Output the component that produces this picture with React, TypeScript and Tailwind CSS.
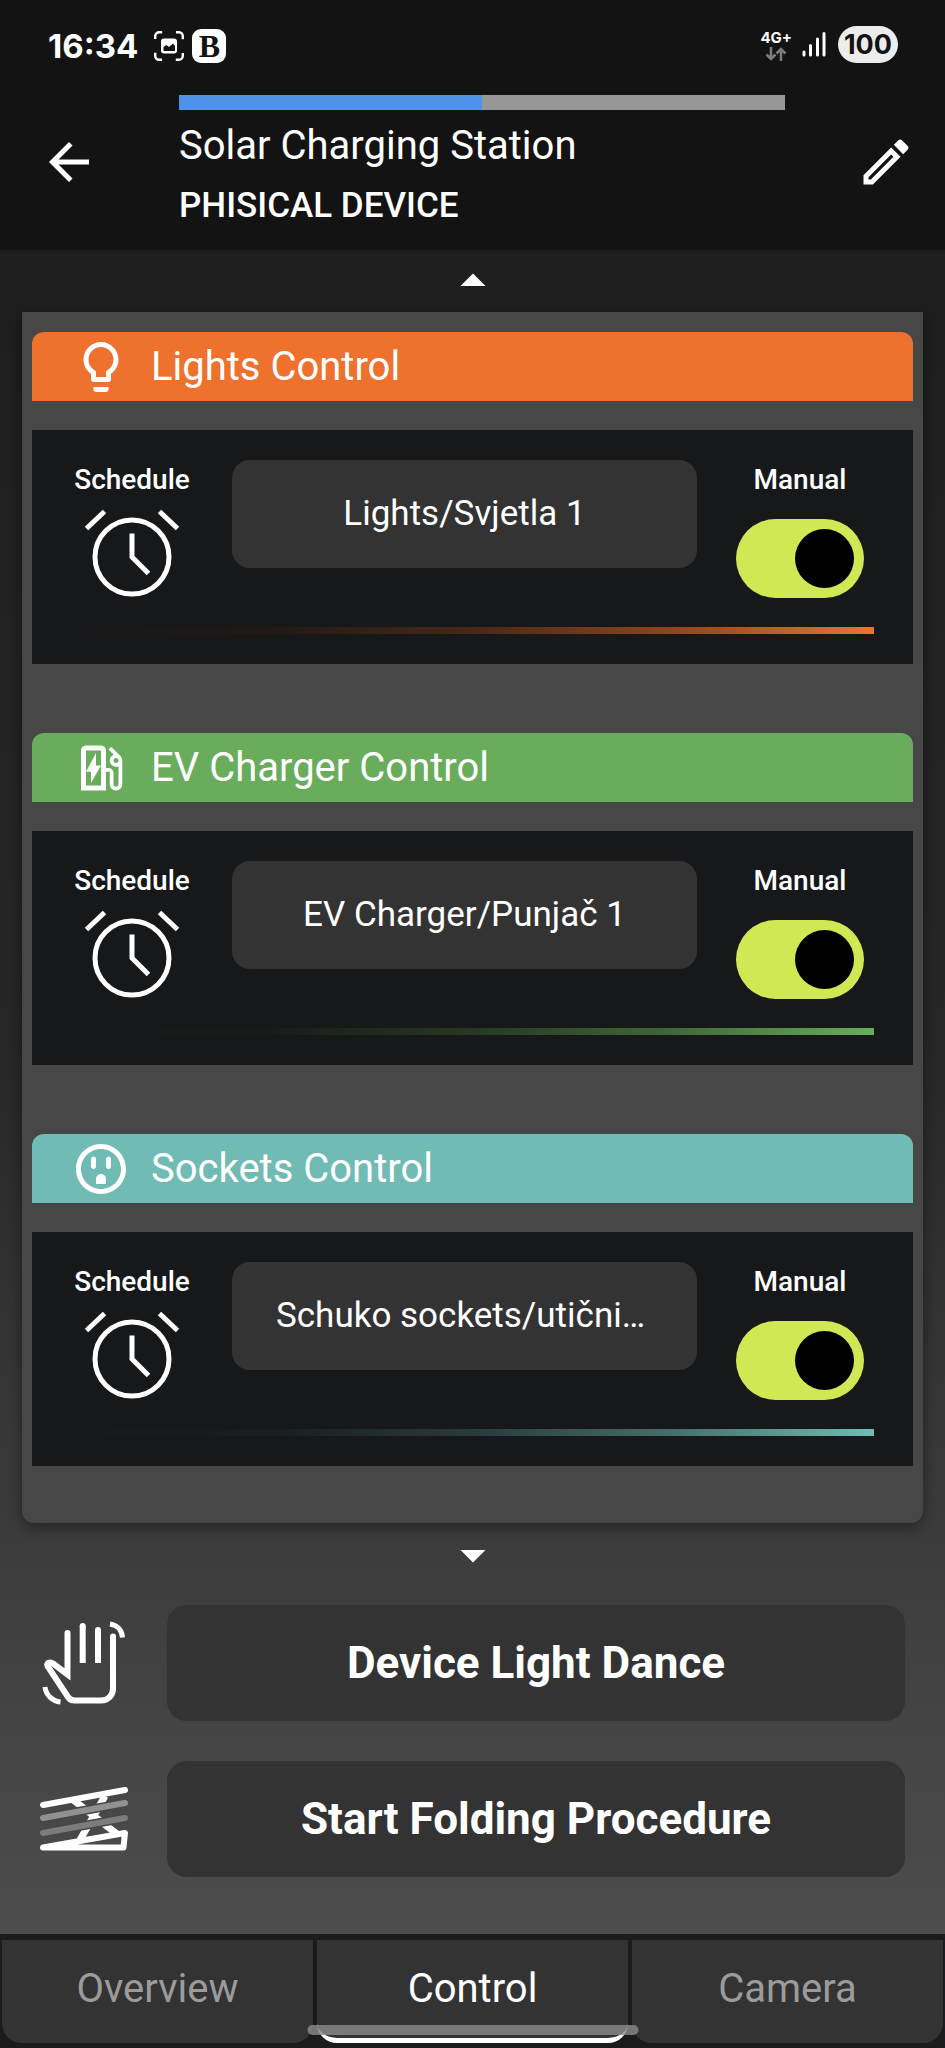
import { useState, type ReactNode } from 'react';
import {
  MdArrowBack,
  MdArrowDropDown,
  MdArrowDropUp,
  MdOutlineEdit,
  MdOutlineEvStation,
  MdOutlineLightbulb,
  MdOutlineOutlet,
} from 'react-icons/md';

function CaptureIcon() {
  return (
    <svg viewBox="0 0 30 30" className="size-[30px]" fill="none" aria-hidden="true">
      <path
        d="M1.200 8V5a4 4 0 0 1 4-3.800h3M22 1.200h3a4 4 0 0 1 3.800 4v3M28.800 22v3a4 4 0 0 1-4 3.800h-3M8 28.800H5a4 4 0 0 1-3.800-4v-3"
        stroke="#fff"
        strokeWidth="2.400"
      />
      <rect x="7" y="7.500" width="16" height="15" rx="3" fill="#fff" />
      <path d="M9.500 20v-4l3-2 2.500 2 4-3.500 2 2.500v5z" fill="#131313" />
    </svg>
  );
}

function SignalIcon() {
  return (
    <svg viewBox="0 0 24 27" className="h-[27px] w-6" stroke="#fff" strokeWidth="3" strokeLinecap="round" aria-hidden="true">
      <path d="M2 21v3M8.500 14.500V24M15.500 8v16M22 2.500V24" />
    </svg>
  );
}

function DataArrows() {
  return (
    <svg viewBox="0 0 22 14" className="h-[14px] w-[22px]" fill="none" stroke="#7d7d7d" strokeWidth="2.500" aria-hidden="true">
      <path d="M6 0v12M1.500 7.500 6 12l4.500-4.500M16 14V2M11.500 6.500 16 2l4.500 4.500" />
    </svg>
  );
}

function AlarmIcon() {
  return (
    <svg viewBox="0 0 96 88" className="h-[88px] w-24" fill="none" stroke="#fff" strokeWidth="5" aria-hidden="true">
      <circle cx="48" cy="48" r="37" />
      <path d="M48 24.500V48l16.500 16.500M2.500 19.500 20.500 2.500M93.500 19.500 75.500 2.500" />
    </svg>
  );
}

function WavingHandIcon() {
  return (
    <svg viewBox="0 0 84 84" className="size-[84px]" fill="none" stroke="#fff" strokeWidth="6" aria-hidden="true">
      <path d="M25.500 12v41.500L11 42.500c-3-2.200-7-.5-5.500 2.500L26 76c1.800 2.800 3.500 3.500 6.500 3.500H59c7 0 12-5 12-12v-52" strokeLinecap="round" />
      <path d="M40.700 5V42M56 9V42" />
      <circle cx="40.700" cy="5" r="3" fill="#fff" stroke="none" />
      <circle cx="56" cy="9" r="3" fill="#fff" stroke="none" />
      <path d="M68 3c7 1 12 6 12.500 13.500M3 66c1 8 7 14 15.500 15" strokeWidth="5" />
    </svg>
  );
}

function FoldingIcon() {
  return (
    <svg viewBox="0 0 90 66" className="h-[66px] w-[90px]" fill="none" strokeLinecap="round" aria-hidden="true">
      <path d="M33 13 78 48M66 10 41 54" stroke="#fff" strokeWidth="7" strokeLinecap="butt" />
      <path d="m4 32 82-15" stroke="#474747" strokeWidth="9" strokeLinecap="butt" />
      <path d="m4 47 82-15" stroke="#474747" strokeWidth="9" strokeLinecap="butt" />
      <path d="m4 32 82-15" stroke="#919191" strokeWidth="6" />
      <path d="m4 47 82-15" stroke="#7c7c7c" strokeWidth="6" />
      <path d="m4 19 82-15M4 61.500 86 47l-1.500 14.500z" stroke="#fff" strokeWidth="6" strokeLinejoin="round" />
    </svg>
  );
}

type Section = {
  id: string;
  title: string;
  device: string;
  icon: ReactNode;
  header: string;
  line: string;
};

const sections: Section[] = [
  {
    id: 'lights',
    title: 'Lights Control',
    device: 'Lights/Svjetla 1',
    icon: <MdOutlineLightbulb className="size-[60px]" />,
    header: 'bg-[#ee722e]',
    line: 'bg-[linear-gradient(to_right,transparent,rgba(60,29,12,0.25)_25%,rgba(119,57,23,0.5)_50%,rgba(179,86,35,0.75)_75%,#ee722e)]',
  },
  {
    id: 'charger',
    title: 'EV Charger Control',
    device: 'EV Charger/Punjač 1',
    icon: <MdOutlineEvStation className="size-[60px]" />,
    header: 'bg-[#69ad5c]',
    line: 'bg-[linear-gradient(to_right,transparent,rgba(26,43,23,0.25)_25%,rgba(53,87,46,0.5)_50%,rgba(79,130,69,0.75)_75%,#69ad5c)]',
  },
  {
    id: 'sockets',
    title: 'Sockets Control',
    device: 'Schuko sockets/utičnice 1',
    icon: <MdOutlineOutlet className="size-[60px]" />,
    header: 'bg-[#71bbb5]',
    line: 'bg-[linear-gradient(to_right,transparent,rgba(28,47,45,0.25)_25%,rgba(57,94,91,0.5)_50%,rgba(85,140,136,0.75)_75%,#71bbb5)]',
  },
];

function ControlSection({ section }: { section: Section }) {
  const [on, setOn] = useState(true);
  return (
    <section>
      <h2 className={`flex h-[69px] items-center gap-5 rounded-t-xl pl-[39px] text-[40px] leading-none ${section.header}`}>
        {section.icon}
        {section.title}
      </h2>
      <div className="mt-[29px] bg-[#17181a] px-[39px] pt-[30px] pb-[30px]">
        <div className="flex h-[137px] items-start">
          <button type="button" className="mt-1 flex w-[122px] flex-col items-center text-[28px] leading-[32px] font-medium">
            Schedule
            <span className="mt-[13px]">
              <AlarmIcon />
            </span>
          </button>
          <button type="button" className="mx-[39px] h-[108px] min-w-0 flex-1 truncate rounded-[18px] bg-[#333333] px-11 text-[35px]">
            {section.device}
          </button>
          <div className="mt-1 mr-[10px] flex w-32 flex-col items-center">
            <label htmlFor={section.id} className="text-[28px] leading-[32px] font-medium">
              Manual
            </label>
            <input
              id={section.id}
              type="checkbox"
              role="switch"
              checked={on}
              onChange={() => setOn(!on)}
              className="mt-[23px] flex h-[79px] w-32 appearance-none items-center rounded-full bg-[#555555] px-[10px] before:size-[59px] before:rounded-full before:bg-black before:content-[''] checked:justify-end checked:bg-[#cfe854]"
            />
          </div>
        </div>
        <div className={`mt-[30px] h-[7px] ${section.line}`} />
      </div>
    </section>
  );
}

function Action({ icon, label }: { icon: ReactNode; label: string }) {
  return (
    <div className="flex items-center">
      <span className="flex w-[167px] justify-center" aria-hidden="true">
        {icon}
      </span>
      <button type="button" className="h-[116px] flex-1 rounded-[20px] bg-[#333333] text-[44px] font-bold">
        {label}
      </button>
    </div>
  );
}

const tabs = ['Overview', 'Control', 'Camera'];

export default function App() {
  const [active, setActive] = useState('Control');
  return (
    <div className="flex min-h-screen flex-col bg-[#1a1b1c] font-['Roboto',sans-serif] text-white">
      <header className="bg-[#131313] pb-6">
        <div className="flex h-[95px] items-start justify-between pr-[47px] pl-12">
          <div className="flex items-center pt-[27px]">
            <span className="font-['Inter',sans-serif] text-[33px] leading-[38px] font-bold">16:34</span>
            <span className="ml-4">
              <CaptureIcon />
            </span>
            <span className="ml-2 flex size-[34px] items-center justify-center rounded-[9px] bg-white font-['Liberation_Serif',serif] text-[32px] leading-none font-bold text-[#131313]">
              B
            </span>
          </div>
          <div className="flex items-center pt-[26px]">
            <span className="flex flex-col items-center font-['Inter',sans-serif] text-[15px] leading-[18px] font-bold">
              4G+
              <DataArrows />
            </span>
            <span className="ml-[10px]">
              <SignalIcon />
            </span>
            <span className="ml-3 flex h-[37px] w-[60px] items-center justify-center rounded-full bg-[#ececec] font-['Inter',sans-serif] text-[27px] leading-none font-bold text-[#131313]">
              100
            </span>
          </div>
        </div>
        <div className="flex">
          <div className="flex w-[179px] pt-[37px] pl-[39px]">
            <button type="button" aria-label="Back" className="size-[60px]">
              <MdArrowBack className="size-[60px]" />
            </button>
          </div>
          <div className="flex-1">
            <div role="progressbar" aria-label="Progress" aria-valuenow={50} className="h-[15px] bg-[#979797]">
              <div className="h-full w-1/2 bg-[#4f93e8]" />
            </div>
            <h1 className="mt-3 text-[40px] leading-[48px]">Solar Charging Station</h1>
            <p className="mt-4 text-[35px] leading-[40px] font-medium">PHISICAL DEVICE</p>
          </div>
          <div className="flex w-40 justify-end pt-[37px] pr-[29px]">
            <button type="button" aria-label="Edit" className="size-[60px]">
              <MdOutlineEdit className="size-[60px]" />
            </button>
          </div>
        </div>
      </header>

      <main className="flex-1 bg-linear-to-b from-[#1e1e1e] via-[#262626] via-45% to-[#4d4d4d] pb-[57px]">
        <button type="button" aria-label="Scroll up" className="flex h-[62px] w-full items-center justify-center">
          <MdArrowDropUp className="size-[60px]" />
        </button>
        <div className="mx-[22px] space-y-[69px] rounded-b-xl bg-[#474747] px-[10px] pt-5 pb-[57px] shadow-[0_4px_14px_rgba(0,0,0,0.4)]">
          {sections.map((section) => (
            <ControlSection key={section.id} section={section} />
          ))}
        </div>
        <button type="button" aria-label="Scroll down" className="flex h-[82px] w-full items-start justify-center pt-[2px]">
          <MdArrowDropDown className="size-[60px]" />
        </button>
        <div className="space-y-10 pr-10">
          <Action icon={<WavingHandIcon />} label="Device Light Dance" />
          <Action icon={<FoldingIcon />} label="Start Folding Procedure" />
        </div>
      </main>

      <nav className="relative grid grid-cols-3 gap-1 px-[2px] pt-[6px] pb-[5px]">
        {tabs.map((tab) => (
          <button
            key={tab}
            type="button"
            aria-current={tab === active ? 'page' : undefined}
            onClick={() => setActive(tab)}
            className={`h-[103px] rounded-b-[20px] border-b-[5px] bg-[#333333] text-[40px] leading-none ${
              tab === active ? 'border-white text-white' : 'border-[#333333] text-[#9b9b9b]'
            }`}
          >
            {tab}
          </button>
        ))}
        <span className="absolute bottom-[13px] left-1/2 h-[10px] w-[331px] -translate-x-1/2 rounded-full bg-[#8c8c8c]/80" />
      </nav>
    </div>
  );
}
